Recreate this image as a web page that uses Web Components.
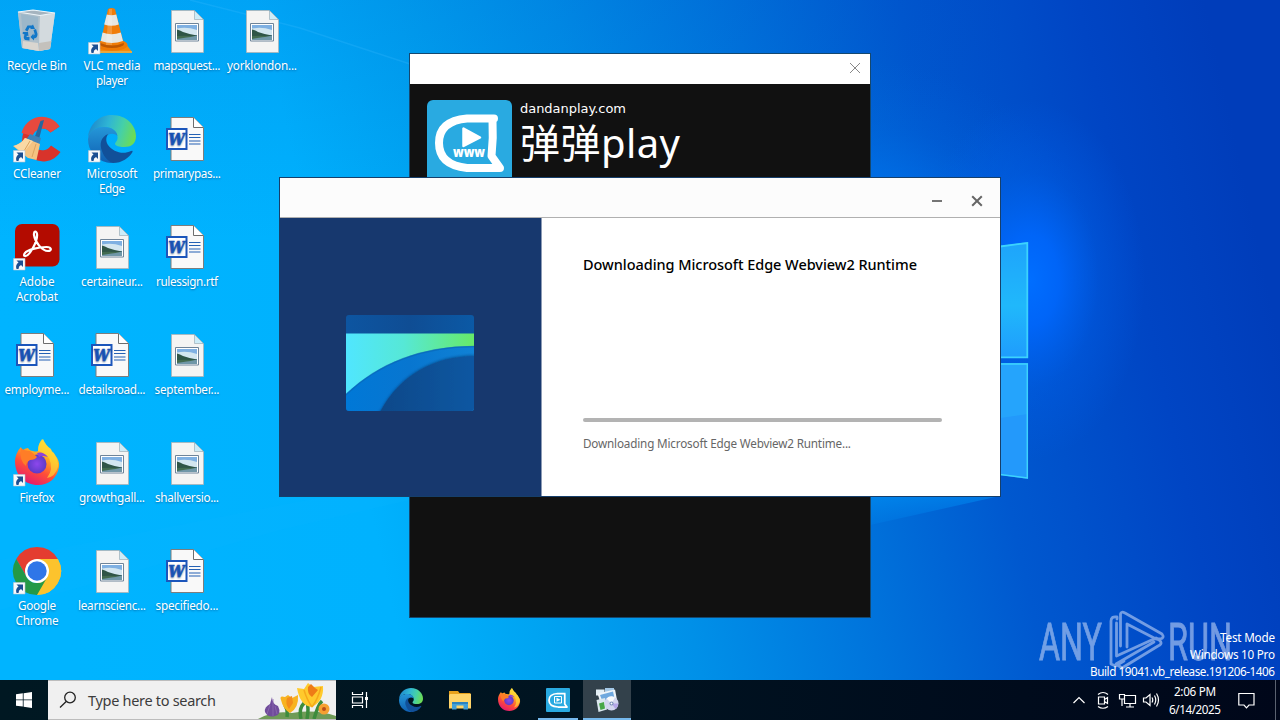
<!DOCTYPE html>
<html lang="en">
<head>
<meta charset="utf-8">
<title>Desktop</title>
<style>
  body {
    margin: 0;
    width: 1280px;
    height: 720px;
    overflow: hidden;
    font-family: "Noto Sans", "Open Sans", "Noto Sans CJK SC", sans-serif;
    font-size: 12px;
  }
</style>
</head>
<body>
<win-desktop></win-desktop>

<script>
const ICONS = {
  bin: `
    <path d="M5 5 20 3 42 6 37 42 26 44 9 41z" fill="#c6d3dc"/>
    <path d="M5 5 27 8.500 26 44 9 41z" fill="#aebfca"/>
    <path d="M27 8.500 42 6 37 42 26 44z" fill="#d3dade"/>
    <path d="M8 7 25 10 24.500 33 10 31z" fill="#8fb2c8" opacity=".6"/>
    <path d="M10 34 25 36 26 44 9.500 41z" fill="#d9d6d0"/>
    <path d="M26 36 38.500 34 37 42 26 44z" fill="#c4c1bc"/>
    <path d="M5 5 20 3 42 6 27 8.500z" fill="#a5b4bf" stroke="#edf5fa" stroke-width="1.200"/>
    <g fill="#1177c8">
      <path d="M12 23 14.500 18.500H19L20 17.500 22 22H17L18 21 16.500 20.800 14.500 24.500z"/>
      <path d="M20.500 23 23 22 24.500 27Q24.500 31 21 31.500V33.500L17.500 30 20.500 26.500V28.500Q22 28 21.500 26.500z"/>
      <path d="M10 25H15L15.500 29.500 14 28.500 13.500 30H16.500V33.500L12 33Q10 31.500 11.500 27.500L9.500 26.500z"/>
    </g>`,
  vlc: `
    <path d="M10 37 38 37 44 45 5 45z" fill="#f58a0c"/><path d="M5 44h39v2H5z" fill="#e8a83c"/>
    <ellipse cx="24" cy="38" rx="15.500" ry="6" fill="#ef7a06"/><ellipse cx="24" cy="37" rx="12" ry="4" fill="#bd5703"/>
    <path d="M20 2Q23.500 0 27 2L35.500 36Q24 41 12.500 36z" fill="#f07c08"/>
    <path d="M18.800 7.500 Q23.500 9 28.300 7.500 L30.800 17.500 Q23.500 20 16.200 17.500z" fill="#e6e6e2"/>
    <path d="M14.500 25.500 Q23.500 29 32.800 25.500 L35 34 Q24 38 12.800 34z" fill="#e6e6e2"/>
    <path d="M21 2h3v36h-6z" fill="#fff" opacity=".2"/>`,
  image: `
    <path d="M8.500 3.500H31L40.500 13V45.500H8.500z" fill="#f4f4f3" stroke="#aeb4b6" stroke-width=".8"/>
    <path d="M31.500 3.500V12.500H40.500z" fill="#ccecf8" stroke="#9caeb8" stroke-width=".7"/>
    <path d="M12.500 16.500h23v17.500h-23z" fill="#fff" stroke="#6f8499"/>
    <path d="M14 18h20v15H14z" fill="#7fb0e2"/><path d="M14 21.500q10-2 20 1.500v5H14z" fill="#d3e6f0"/>
    <path d="M14 22.500Q17 23 20 25Q27 27.500 34 28.500V29.500H14z" fill="#2f5547"/>
    <path d="M14 29h20v4H14z" fill="#7097a8"/>
    <path d="M14 29Q26 28.500 32 29.500Q24 30 14 32z" fill="#426b50"/>`,
  word: `
    <path d="M8 2.500H30.500L40.500 12.500V45.500H8z" fill="#f9f9f9" stroke="#7d7d7d"/>
    <path d="M30.500 2.500V12.500H40.500" fill="#fff" stroke="#6d6d6d"/>
    <path d="M26 19.500h11.500M26 22.500h11.500M26 26h11.500M26 29h11.500" stroke="#2561b4" stroke-width="1.100"/>
    <path d="M4 14h19.500v20H4z" fill="#fff" stroke="#1c56bb" stroke-width="2"/>
    <text x="13.500" y="30" text-anchor="middle" textLength="16.500" lengthAdjust="spacingAndGlyphs" font-family="DejaVu Serif" font-size="17" font-weight="700" font-style="italic" fill="#1c56bb" stroke="#1c56bb" stroke-width=".6">W</text>`,
  ccleaner: `
    <path d="M47 11.500A21 21.500 0 1 0 48 37L38.500 30.500A10.500 11 0 1 1 38 17.500z" transform="translate(-.5 0)" fill="#d8332b"/>
    <path d="M47 11.500A21 21.500 0 0 0 9 18L20 21A10.500 11 0 0 1 38 17.500z" transform="translate(-.5 0)" fill="#e7493e"/>
    <path d="M27.500 6 31 5 25.500 26 21 24z" fill="#27679f"/>
    <path d="M17 19 28 23 26 30 13 25z" fill="#3d83b9"/>
    <path d="M12 23 27 29 23.500 45 15 43 0 31Q8 29 12 23z" fill="#f4c382"/>
    <path d="M12 23 20 26 10 38 1 31Q8 29 12 23z" fill="#f9d9a5"/>
    <path d="M17 26 11 36M23 29 19 42" stroke="#dca45e" fill="none"/>`,
  edge: `
    <defs>
      <linearGradient id="ea" x1="0" y1=".3" x2="1" y2=".5"><stop offset="0" stop-color="#1c86cc"/><stop offset=".4" stop-color="#2fb5d4"/><stop offset=".7" stop-color="#45d0a8"/><stop offset="1" stop-color="#6cdc54"/></linearGradient>
      <linearGradient id="eb" x1="0" y1="0" x2="0" y2="1"><stop offset="0" stop-color="#2597d8"/><stop offset="1" stop-color="#0f5fb2"/></linearGradient>
    </defs>
    <path d="M0 22C2 7 13 0 24 0C39 0 48 11 48 21C48 29 43 32 36 32C31 32 27.500 31 27 29C27 27 30 26 29.500 22C29 16 24 12 16 12C8 12 3 16 0 22z" fill="url(#ea)"/>
    <path d="M0 24C1 16 8 12 16 12C24 12 29 16 29.500 21C27 18.500 23 18 20 20C14 25 14 38 26 47.800C23 48 21 48 19 47.500C8 45 0 36 0 24z" fill="url(#eb)"/>
    <path d="M20 19C13 22 11 29 14 36C16 42 20 46 25 48C34 48 41 43 44.500 37Q45 35 43 36C35 40 25 37 20 30C17.500 26 18 22 20 19z" fill="#115099"/>`,
  acrobat: `
    <rect x="2" y="1" width="44.500" height="42.500" rx="7" fill="#b30b00"/>
    <path d="M12 33C16 34 25 18 24 11C23.500 7.500 20.500 8 21 12C22 19 29 28 35 28C39 28 39 24 33.500 24C25 24 14 27 12 30C10.500 32 11 33 12 33z" fill="none" stroke="#fff" stroke-width="2.200"/>`,
  firefox: `
    <defs>
      <linearGradient id="fa" x1=".8" y1="0" x2=".3" y2="1"><stop offset="0" stop-color="#fff04a"/><stop offset=".35" stop-color="#ffae22"/><stop offset=".65" stop-color="#ff5037"/><stop offset="1" stop-color="#e41772"/></linearGradient>
      <radialGradient id="fb"><stop offset="0" stop-color="#8d47ed"/><stop offset="1" stop-color="#5d3bc7"/></radialGradient>
    </defs>
    <path d="M2 22C2 18 4 12 8 8L9 12Q12 9 15 9C16 11 18 12 20 12Q23 13 25 12Q25 4 30 0Q33 7 38 10L39 13Q41 13 42 16Q47 22 46 28C44 39 36 46 25 46C12 46 2 37 2 22z" fill="url(#fa)"/>
    <path d="M29 0Q34 8 39 12Q46 20 45 28Q42 38 34 39Q41 30 36 19Q28 12 25 12Q25 5 29 0z" fill="#ffdc38" opacity=".65"/>
    <circle cx="24" cy="25" r="9.500" fill="url(#fb)"/>
    <path d="M8 9Q11 12 17 12Q20 14 24 18Q22 21 17 21Q13 23 13 27Q6 22 8 9z" fill="#ff7d27"/>
    <path d="M24 14Q30 12 35 18Q29 16 26 18z" fill="#8d43dc"/>`,
  chrome: `
    <path d="M24 24 44.800 12A24 24 0 0 1 24 48z" fill="#fcc32d"/>
    <path d="M24 12H44.800A24 24 0 0 1 24 48L34.400 30z" fill="#fcc32d"/>
    <path d="M3.200 12A24 24 0 0 1 44.800 12H24V24L13.600 30z" fill="#e43d30"/>
    <path d="M3.200 12 13.600 30A12 12 0 0 0 34.400 30L24 48A24 24 0 0 1 3.200 12z" fill="#249946"/>
    <circle cx="24" cy="24" r="12" fill="#fff"/><circle cx="24" cy="24" r="9.700" fill="#2f76e8"/>`,
  folder: `
    <path d="M2 6h18l3 4h22v8H2z" fill="#e8a21c"/><path d="M4 12h42v29H2V14z" fill="#ffd469"/>
    <path d="M8 28h32v15h-9v-8H17v8H8z" fill="#42a0d9"/><path d="M8 28h32v4H8z" fill="#2c83bf"/>`,
  dandan: `
    <rect width="48" height="48" rx="2" fill="#29aae1"/>
    <path d="M39 11H23Q6 12 6 24.500T24 38H42L37.500 32V11" fill="none" stroke="#fff" stroke-width="3.500" stroke-linejoin="round"/>
    <path d="M17 17h14v13H17z" fill="none" stroke="#fff" stroke-width="2"/><path d="M21 19.500v8l8-4z" fill="#fff"/>`,
  setup: `
    <path d="M2 3h17v12H2z" fill="#e3eef5"/><path d="M20 0h18v12H20z" fill="#a4c8e6"/>
    <path d="M5 11 40 3 44 24 12 33z" fill="#eef4f9"/><path d="M10 14 36 7 39 21 15 27z" fill="#6fa8de"/>
    <path d="M3 24 20 20 24 43 7 48z" fill="#dae7ed"/><path d="M8 31l10-3 2 13-9 3z" fill="#48a747"/>
    <circle cx="33" cy="31" r="14" fill="#d3d6ee"/><path d="M33 31 23 21A14 14 0 0 1 40 19z" fill="#f8fafc"/>
    <path d="M33 31 41 42A14 14 0 0 0 46.500 31z" fill="#b3a6e6"/><circle cx="33" cy="31" r="4" fill="#7189b5"/><circle cx="33" cy="31" r="2" fill="#fff"/>`
}

const SHORTCUT = `
  <path d="M.5 35.500h11.500v11.500H.5z" fill="#f7f9fb" stroke="#b7c5d1" stroke-width=".6"/>
  <path d="M3.500 37.500h6.500v6.500l-2-2Q5.500 43 5.500 46H3.500Q2 42 5.500 39.500z" fill="#1c4f92"/>`

function iconSvg (name, shortcut) {
  return `<svg viewBox="0 0 48 48">${ICONS[name]}${shortcut ? SHORTCUT : ''}</svg>`
}

// Text line spread to a given width with letter-spacing
class FitText extends HTMLElement {
  constructor () {
    super()
    this.attachShadow({ mode: 'open' })
  }

  connectedCallback () {
    this.shadowRoot.innerHTML = `
      <style>
        :host { display: block; white-space: nowrap; width: max-content; }
        span { display: inline-block; }
      </style>
      <span><slot></slot></span>
    `
    const span = this.shadowRoot.querySelector('span')
    const target = Number(this.getAttribute('width'))
    const count = this.textContent.length
    if (target) {
      const gap = (target - span.getBoundingClientRect().width) / (count - 1)
      span.style.letterSpacing = gap + 'px'
      span.style.marginRight = -gap + 'px'
    }
  }
}

class WallpaperView extends HTMLElement {
  constructor () {
    super()
    this.attachShadow({ mode: 'open' })
  }

  connectedCallback () {
    this.shadowRoot.innerHTML = `
      <style>
        :host { display: block; }
        svg { display: block; width: 1280px; height: 720px; }
      </style>
      <svg viewBox="0 0 1280 720">
        <defs>
          <linearGradient id="base" gradientUnits="userSpaceOnUse" x1="0" y1="340" x2="1221" y2="71">
            <stop offset="0" stop-color="#00b4ff"/><stop offset=".26" stop-color="#00b2fe"/>
            <stop offset=".375" stop-color="#00a3f1"/><stop offset=".49" stop-color="#0090e8"/>
            <stop offset=".63" stop-color="#0074dc"/><stop offset=".76" stop-color="#0058cf"/>
            <stop offset=".9" stop-color="#0045c4"/><stop offset="1" stop-color="#003dba"/>
          </linearGradient>
          <linearGradient id="top" x1="0" y1="0" x2="0" y2="1">
            <stop offset="0" stop-color="#0048c0" stop-opacity=".14"/><stop offset="1" stop-color="#0048c0" stop-opacity="0"/>
          </linearGradient>
          <radialGradient id="glow" gradientUnits="userSpaceOnUse" cx="0" cy="0" r="1" gradientTransform="translate(1030 280) scale(115 180)">
            <stop offset="0" stop-color="#006eff"/><stop offset=".25" stop-color="#0068ff" stop-opacity=".85"/><stop offset=".6" stop-color="#0062f0" stop-opacity=".32"/><stop offset="1" stop-color="#0062f0" stop-opacity="0"/>
          </radialGradient>
          <radialGradient id="halo" gradientUnits="userSpaceOnUse" cx="0" cy="0" r="1" gradientTransform="translate(860 270) scale(240 210)">
            <stop offset="0" stop-color="#0084ff"/><stop offset=".4" stop-color="#0078f4" stop-opacity=".6"/><stop offset=".7" stop-color="#0070e8" stop-opacity=".2"/><stop offset="1" stop-color="#0068e0" stop-opacity="0"/>
          </radialGradient>
          <linearGradient id="pane" x1="0" y1="0" x2="0" y2="1">
            <stop offset="0" stop-color="#1ea4fb"/><stop offset=".55" stop-color="#20b8fb"/><stop offset="1" stop-color="#1f9cfd"/>
          </linearGradient>
          <linearGradient id="floor" x1="0" y1="0" x2="0" y2="1">
            <stop offset="0" stop-color="#00a0ff" stop-opacity=".5"/><stop offset="1" stop-color="#0098ff" stop-opacity=".12"/>
          </linearGradient>
        </defs>
        <path d="M0 0h1280v720H0z" fill="url(#base)"/>
        <path d="M0 0h1000v240H0z" fill="url(#top)"/>
        <path d="M0 0h1280v720H0z" fill="url(#halo)"/>
        <path d="M0 0h1280v720H0z" fill="url(#glow)"/>
        <path d="M190 0 300 28 410 64" fill="none" stroke="#3cbcff" stroke-width="1.500" opacity=".25"/>
        <path d="M1000 490V496L870 525V490z" fill="url(#floor)"/>
        <path d="M0 610 280 530 410 500V480L0 560z" fill="#10baff" opacity=".14"/>
        <path d="M1000 246 1028 242V358H1000z" fill="url(#pane)"/>
        <path d="M1000 363H1028V479L1000 475z" fill="#2399fb"/>
        <path d="M1000 363H1028V414L1000 418z" fill="#25a4fc"/>
        <g fill="none" stroke="#3cd3fd" stroke-width="1.500">
          <path d="M1000 246.500 1027.300 243V357.300H1000" stroke-width="1.800"/>
          <path d="M1000 364H1027.300V478L1000 474.500"/>
        </g>
      </svg>
    `
  }
}

class DesktopIcon extends HTMLElement {
  constructor () {
    super()
    this.attachShadow({ mode: 'open' })
  }

  connectedCallback () {
    this.shadowRoot.innerHTML = `
      <style>
        :host {
          display: flex;
          flex-direction: column;
          align-items: center;
          color: #fff;
          font-size: 11.7px;
          line-height: 15px;
          text-shadow: 0 1px 2px rgba(0, 40, 90, .45);
        }
        svg { display: block; width: 48px; height: 48px; margin-bottom: 3px; overflow: visible; }
      </style>
      ${iconSvg(this.getAttribute('icon'), this.hasAttribute('shortcut'))}
      <slot></slot>
    `
  }
}

class DandanWindow extends HTMLElement {
  constructor () {
    super()
    this.attachShadow({ mode: 'open' })
  }

  connectedCallback () {
    this.shadowRoot.innerHTML = `
      <style>
        :host {
          display: flex;
          flex-direction: column;
          box-sizing: border-box;
          border: 1px solid #15486f;
          background: #111;
          color: #fff;
        }
        header {
          display: flex;
          justify-content: flex-end;
          align-items: center;
          height: 30px;
          padding-right: 9px;
          background: #fff;
        }
        header svg { width: 12px; height: 12px; margin-top: -2px; }
        .brand { display: flex; gap: 8px; padding: 16px 17px; }
        .brand > svg { width: 85px; height: 85px; }
        .site { font: 13px/16px "DejaVu Sans", sans-serif; padding-top: 1px; }
        .name { font-size: 40px; line-height: 52px; }
      </style>
      <header>
        <svg viewBox="0 0 12 12"><path d="M1 1 11 11M11 1 1 11" stroke="#888" fill="none"/></svg>
      </header>
      <div class="brand">
        <svg viewBox="0 0 85 85">
          <rect width="85" height="85" rx="6" fill="#29aae1"/>
          <path d="M67 18.500H40Q12 21 12 43T40 68H73L64.500 56Q66.500 38 65.500 20" fill="none" stroke="#fff" stroke-width="8" stroke-linejoin="round" stroke-linecap="round"/>
          <path d="M36.500 28.500V46L53 37.500z" fill="#fff" stroke="#fff" stroke-width="2.500" stroke-linejoin="round"/>
          <text x="26" y="57" textLength="32" lengthAdjust="spacingAndGlyphs" font-family="Open Sans" font-size="14" font-weight="800" fill="#fff">www</text>
        </svg>
        <div>
          <fit-text class="site" width="106">dandanplay.com</fit-text>
          <fit-text class="name" width="160">弹弹play</fit-text>
        </div>
      </div>
    `
  }
}

class InstallerWindow extends HTMLElement {
  constructor () {
    super()
    this.attachShadow({ mode: 'open' })
  }

  connectedCallback () {
    this.shadowRoot.innerHTML = `
      <style>
        :host {
          display: flex;
          flex-direction: column;
          box-sizing: border-box;
          border: 1px solid #163f6b;
          background: #fff;
        }
        header {
          display: flex;
          justify-content: flex-end;
          align-items: center;
          gap: 28px;
          box-sizing: border-box;
          height: 40px;
          padding: 6px 17px 0 0;
          background: #fcfcfc;
          border-bottom: 1px solid #b0b0b0;
        }
        header svg { width: 12px; height: 12px; }
        main { display: flex; flex: 1; }
        .art {
          display: flex;
          justify-content: center;
          align-items: center;
          width: 262px;
          padding: 12px 1px 0 0;
          box-sizing: border-box;
          background: #17386e;
          border-right: 1px solid #8c9bb5;
        }
        .art svg { width: 128px; height: 96px; }
        .info { display: flex; flex-direction: column; padding: 35px 58px 0 41px; flex: 1; }
        h1 { margin: 0; font-size: 14.500px; font-weight: 500; line-height: 22px; color: #000; }
        .bar { height: 4px; border-radius: 2px; background: #b3b3b3; margin: 143px 0 12px; }
        p { margin: 0; font-size: 11.700px; line-height: 18px; color: #666; }
      </style>
      <header>
        <svg viewBox="0 0 12 12"><path d="M1 6h10" stroke="#666" stroke-width="1.800"/></svg>
        <svg viewBox="0 0 12 12"><path d="M1.200 1.200 10.800 10.800M10.800 1.200 1.200 10.800" stroke="#666" stroke-width="2"/></svg>
      </header>
      <main>
        <div class="art">
          <svg viewBox="0 0 128 96">
            <defs>
              <clipPath id="c"><rect width="128" height="96" rx="3"/></clipPath>
              <linearGradient id="g1"><stop offset="0" stop-color="#50e6ff"/><stop offset=".45" stop-color="#56e8d6"/><stop offset="1" stop-color="#67ea68"/></linearGradient>
              <linearGradient id="g2"><stop offset="0" stop-color="#0078d7"/><stop offset=".5" stop-color="#0876d0"/><stop offset="1" stop-color="#1082d5"/></linearGradient>
              <linearGradient id="g3"><stop offset="0" stop-color="#114888"/><stop offset="1" stop-color="#0d57a2"/></linearGradient>
              <linearGradient id="g4"><stop offset="0" stop-color="#0d55a1"/><stop offset=".5" stop-color="#0f4d94"/><stop offset="1" stop-color="#0b59a5"/></linearGradient>
              <filter id="s" x="-20%" y="-20%" width="140%" height="140%"><feDropShadow dx="0" dy="-1" stdDeviation="1.200" flood-color="#003470" flood-opacity=".5"/></filter>
            </defs>
            <g clip-path="url(#c)">
              <path d="M0 0h128v96H0z" fill="url(#g4)"/>
              <path d="M0 18.500h128V40L0 84z" fill="url(#g1)"/>
              <path d="M-1 80C32 48 76 31 129 31V100H-1z" fill="url(#g2)"/>
              <path d="M-1 80.500C32 48.500 76 31.500 129 31.500" fill="none" stroke="#0a5fae" stroke-width="1.500" opacity=".5"/>
              <path d="M34.500 96C54 60 88 41 129 41V100H30z" fill="url(#g3)" filter="url(#s)"/>
            </g>
          </svg>
        </div>
        <div class="info">
          <h1><fit-text width="334">Downloading Microsoft Edge Webview2 Runtime</fit-text></h1>
          <div class="bar"></div>
          <p><fit-text width="268">Downloading Microsoft Edge Webview2 Runtime...</fit-text></p>
        </div>
      </main>
    `
  }
}

class AnyrunMark extends HTMLElement {
  constructor () {
    super()
    this.attachShadow({ mode: 'open' })
  }

  connectedCallback () {
    this.shadowRoot.innerHTML = `
      <style>
        :host { display: block; opacity: .66; }
        svg { display: block; width: 200px; height: 64px; overflow: visible; }
        text { font: 52px Roboto, sans-serif; fill: #adc6f2; stroke: #adc6f2; stroke-width: .9px; }
      </style>
      <svg viewBox="0 0 200 64">
        <text x="3" y="53" textLength="63" lengthAdjust="spacingAndGlyphs">ANY</text>
        <text x="132" y="53" textLength="64" lengthAdjust="spacingAndGlyphs">RUN</text>
        <g fill="none" stroke="#adc6f2" stroke-width="2.800" stroke-linejoin="round" stroke-linecap="round">
          <path d="M81 12V10Q75 9 75 14V57L79.500 59 88 54"/>
          <path d="M80.500 16V49L120 31Q129 36 122 39L86 61 80 57 118 35"/>
          <path d="M84.500 39V7Q85 4 89 6L126 27Q129 31 124 32H120L91 17V40"/>
        </g>
      </svg>
    `
  }
}

class BuildInfo extends HTMLElement {
  constructor () {
    super()
    this.attachShadow({ mode: 'open' })
  }

  connectedCallback () {
    this.shadowRoot.innerHTML = `
      <style>
        :host {
          display: flex;
          flex-direction: column;
          align-items: flex-end;
          color: #fff;
          font-size: 11.700px;
          line-height: 17px;
        }
      </style>
      <fit-text width="55">Test Mode</fit-text>
      <fit-text width="85">Windows 10 Pro</fit-text>
      <fit-text width="185">Build 19041.vb_release.191206-1406</fit-text>
    `
  }
}

class TaskButton extends HTMLElement {
  constructor () {
    super()
    this.attachShadow({ mode: 'open' })
  }

  connectedCallback () {
    this.shadowRoot.innerHTML = `
      <style>
        :host {
          display: flex;
          flex-direction: column;
          align-items: center;
          justify-content: space-between;
          width: 48px;
          height: 40px;
        }
        svg { width: 24px; height: 24px; margin-top: 8px; }
        i { width: 0; height: 2px; background: #76b9ed; }
        :host([state="open"]) i { width: 40px; }
        :host([state="active"]) { background: #33414b; }
        :host([state="active"]) i { width: 48px; }
      </style>
      ${iconSvg(this.getAttribute('icon'))}
      <i></i>
    `
  }
}

class TaskBar extends HTMLElement {
  constructor () {
    super()
    this.attachShadow({ mode: 'open' })
  }

  connectedCallback () {
    this.shadowRoot.innerHTML = `
      <style>
        :host {
          display: flex;
          height: 40px;
          background: linear-gradient(90deg, #001822, #001421 45%, #000b1c 80%, #00071a);
          color: #fff;
        }
        svg { display: block; }
        .start { display: flex; align-items: center; justify-content: center; width: 48px; }
        .search {
          display: flex;
          align-items: center;
          box-sizing: border-box;
          width: 288px;
          height: 40px;
          padding-left: 11px;
          background: #f0f0f0;
          border: 1px solid #bcbcbc;
          border-width: 1px 0;
          color: #3c3c3c;
          font-size: 14.500px;
        }
        .search fit-text { margin-left: 11px; }
        .flowers { margin-left: auto; }
        .view { display: flex; align-items: center; justify-content: center; width: 48px; margin-right: 3px; }
        .apps { display: flex; gap: 1px; }
        .tray { display: flex; align-items: center; margin-left: auto; }
        .clock {
          display: flex;
          flex-direction: column;
          align-items: center;
          width: 60px;
          margin: -1px 13px 0 5px;
          line-height: 18px;
          font-size: 11.700px;
        }
        .edge { width: 4px; height: 40px; margin-left: 20px; border-left: 1px solid #5a6270; }
      </style>
      <div class="start">
        <svg width="16" height="16" viewBox="0 0 16 16" fill="#fff"><path d="M0 2.300 6.800 1.300V7.500H0zM7.600 1.200 16 0V7.500H7.600zM0 8.300H6.800V14.600L0 13.700zM7.600 8.300H16V16L7.600 14.800z"/></svg>
      </div>
      <div class="search">
        <svg width="18" height="18" viewBox="0 0 18 18" fill="none" stroke="#222" stroke-width="1.300"><circle cx="11" cy="6.500" r="5.300"/><path d="M7.200 10.500 1 16.500"/></svg>
        <fit-text width="128">Type here to search</fit-text>
        <svg class="flowers" width="82" height="38" viewBox="0 0 82 38">
          <path d="M4 38Q20 29 38 32Q62 28 82 35V38z" fill="#6f9b57"/>
          <path d="M33 36Q34 29 31 24M47 38Q44 25 53 20Q55 28 53 38M60 38Q64 24 68 20" fill="none" stroke="#3d8b3c" stroke-width="3.500"/>
          <path d="M18 16Q18 23 24 25Q28 33 21 35Q14 37 11 31Q10 26 16 23z" fill="#704c9b"/>
          <path d="M16 24 13 33M19 18V35M21 25 23 33" stroke="#8d6bb0" fill="none" stroke-width=".8"/>
          <path d="M27 19Q25 14 31 16L34 14 38 17 44 14Q45 27 36 32Q29 28 27 19z" fill="#f8b321"/>
          <path d="M33 17 38 15 39 22 35 28Q31 23 33 17z" fill="#f38d1c"/>
          <path d="M43 7 50 8 54 2 59 6 69 5Q70 20 58 26Q46 25 43 7z" fill="#ffca2d"/>
          <path d="M54 6 57 3 61 7 64 9 58 16Q53 13 54 6z" fill="#ee7c17"/>
          <path d="M50 9Q53 19 58 26M67 6Q64 18 58 26" fill="none" stroke="#f6a91b" stroke-width="1.500"/>
          <circle cx="70" cy="28" r="5.500" fill="#f6a032"/><circle cx="70" cy="28" r="2" fill="#ba4d1b"/>
        </svg>
      </div>
      <div class="view">
        <svg width="18" height="16" viewBox="0 0 18 16" fill="none" stroke="#fff" stroke-width="1.200"><path d="M1.500 0V2.500H11.500V0M1.500 16V13.500H11.500V16M1.500 5h10v6h-10zM15.500 0V16"/><path d="M14 5h3v3h-3z" fill="#fff" stroke="none"/></svg>
      </div>
      <div class="apps">
        <task-button icon="edge"></task-button>
        <task-button icon="folder"></task-button>
        <task-button icon="firefox"></task-button>
        <task-button icon="dandan" state="open"></task-button>
        <task-button icon="setup" state="active"></task-button>
      </div>
      <div class="tray">
        <svg width="88" height="20" viewBox="0 0 88 20" fill="none" stroke="#fff" stroke-width="1.200">
          <path d="M1.500 13 7 7.500 12.500 13"/>
          <path d="M26.500 7h6v7h-6zM32.500 9.500 35.500 7.500V13.500L32.500 11.500M26 4.500Q31 .5 36 4.500M26 16.500Q31 20 36 16.500"/>
          <path d="M53 5.500H63.500V13.500H52.500V9M58 13.500V17M54 17h8M47.500 4.500h5v4.500h-5zM50 9V16"/>
          <path d="M71.500 8H74L78 4.500V15.500L74 12H71.500zM80 7.500Q81.500 10 80 12.500M82.500 5.500Q85 10 82.500 14.500M84.500 3.500Q88.500 10 84.500 16.500"/>
        </svg>
        <div class="clock">
          <fit-text width="42">2:06 PM</fit-text>
          <fit-text width="52">6/14/2025</fit-text>
        </div>
        <svg width="17" height="17" viewBox="0 0 17 17" fill="none" stroke="#fff" stroke-width="1.200"><path d="M.8 1.500H16V13H11L8.500 15.800 6 13H.8z"/></svg>
        <div class="edge"></div>
      </div>
    `
  }
}

class WinDesktop extends HTMLElement {
  constructor () {
    super()
    this.attachShadow({ mode: 'open' })
  }

  connectedCallback () {
    // icon, shortcut, [text, width] per label line, in column order
    const items = [
      ['bin', 0, ['Recycle Bin', 60]],
      ['ccleaner', 1, ['CCleaner', 48]],
      ['acrobat', 1, ['Adobe', 35], ['Acrobat', 42]],
      ['word', 0, ['employme...', 65]],
      ['firefox', 1, ['Firefox', 35]],
      ['chrome', 1, ['Google', 38], ['Chrome', 43]],
      ['vlc', 1, ['VLC media', 57], ['player', 32]],
      ['edge', 1, ['Microsoft', 51], ['Edge', 26]],
      ['image', 0, ['certaineur...', 62]],
      ['word', 0, ['detailsroad...', 67]],
      ['image', 0, ['growthgall...', 66]],
      ['image', 0, ['learnscienc...', 68]],
      ['image', 0, ['mapsquest...', 67]],
      ['word', 0, ['primarypas...', 68]],
      ['word', 0, ['rulessign.rtf', 62]],
      ['image', 0, ['september...', 65]],
      ['image', 0, ['shallversio...', 64]],
      ['word', 0, ['specifiedo...', 63]],
      ['image', 0, ['yorklondon...', 70]]
    ]
    const icons = items.map(([icon, shortcut, ...lines]) => `
      <desktop-icon icon="${icon}" ${shortcut ? 'shortcut' : ''}>
        ${lines.map(([text, width]) => `<fit-text width="${width}">${text}</fit-text>`).join('')}
      </desktop-icon>`).join('')

    this.shadowRoot.innerHTML = `
      <style>
        :host {
          display: flex;
          flex-direction: column;
          position: relative;
          width: 1280px;
          height: 720px;
          overflow: hidden;
        }
        wallpaper-view { position: absolute; inset: 0; }
        .icons {
          position: relative;
          display: grid;
          flex: 1;
          grid-auto-flow: column;
          grid-template-rows: repeat(6, 108px);
          grid-auto-columns: 75px;
          box-sizing: border-box;
          padding-top: 7px;
          margin-left: -.5px;
        }
        task-bar { position: relative; }
        dandan-window { position: absolute; left: 409px; top: 53px; width: 462px; height: 565px; }
        installer-window { position: absolute; left: 279px; top: 177px; width: 722px; height: 320px; }
        anyrun-mark { position: absolute; left: 1036px; top: 607px; }
        build-info { position: absolute; right: 5px; top: 629px; }
      </style>
      <wallpaper-view></wallpaper-view>
      <div class="icons">${icons}</div>
      <task-bar></task-bar>
      <dandan-window></dandan-window>
      <installer-window></installer-window>
      <anyrun-mark></anyrun-mark>
      <build-info></build-info>
    `
  }
}

customElements.define('fit-text', FitText)
customElements.define('wallpaper-view', WallpaperView)
customElements.define('desktop-icon', DesktopIcon)
customElements.define('dandan-window', DandanWindow)
customElements.define('installer-window', InstallerWindow)
customElements.define('anyrun-mark', AnyrunMark)
customElements.define('build-info', BuildInfo)
customElements.define('task-button', TaskButton)
customElements.define('task-bar', TaskBar)
customElements.define('win-desktop', WinDesktop)
</script>
</body>
</html>
